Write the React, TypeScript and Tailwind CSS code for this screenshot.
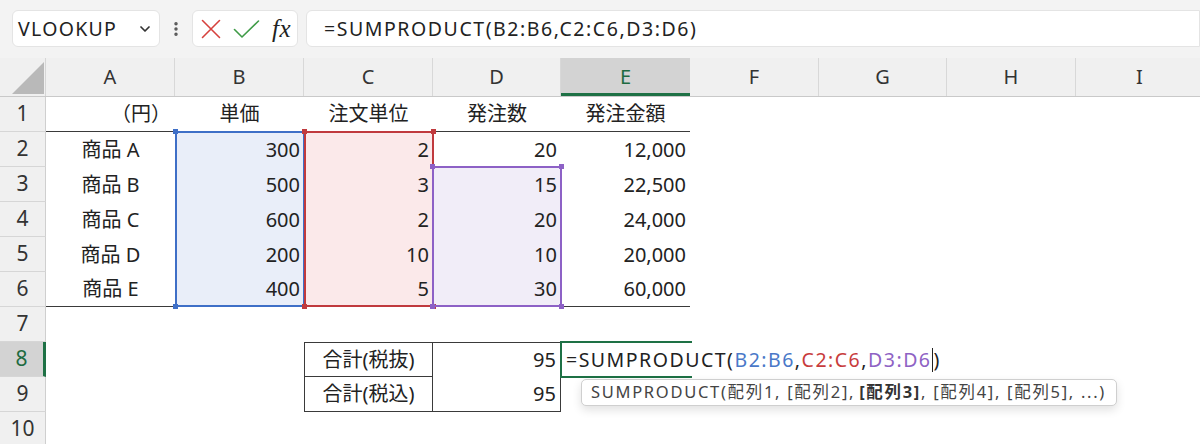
import { ChevronDown, EllipsisVertical } from "lucide-react";

type Align = "l" | "c" | "r";
type Cell = { t: string; a: Align } | null;

const COLS = ["A", "B", "C", "D", "E", "F", "G", "H", "I"];

const ROWS: Cell[][] = [
  [{ t: "（円）", a: "r" }, { t: "単価", a: "c" }, { t: "注文単位", a: "c" }, { t: "発注数", a: "c" }, { t: "発注金額", a: "c" }],
  [{ t: "商品 A", a: "c" }, { t: "300", a: "r" }, { t: "2", a: "r" }, { t: "20", a: "r" }, { t: "12,000", a: "r" }],
  [{ t: "商品 B", a: "c" }, { t: "500", a: "r" }, { t: "3", a: "r" }, { t: "15", a: "r" }, { t: "22,500", a: "r" }],
  [{ t: "商品 C", a: "c" }, { t: "600", a: "r" }, { t: "2", a: "r" }, { t: "20", a: "r" }, { t: "24,000", a: "r" }],
  [{ t: "商品 D", a: "c" }, { t: "200", a: "r" }, { t: "10", a: "r" }, { t: "10", a: "r" }, { t: "20,000", a: "r" }],
  [{ t: "商品 E", a: "c" }, { t: "400", a: "r" }, { t: "5", a: "r" }, { t: "30", a: "r" }, { t: "60,000", a: "r" }],
  [],
  [null, null, { t: "合計(税抜)", a: "c" }, { t: "95", a: "r" }],
  [null, null, { t: "合計(税込)", a: "c" }, { t: "95", a: "r" }],
  [],
];

const ALIGN: Record<Align, string> = {
  l: "justify-start pl-[4px]",
  c: "justify-center",
  r: "justify-end pr-[4px]",
};

// per-cell border classes (row index 0-based, col index 0-based)
function borderFor(r: number, c: number): string {
  const cls: string[] = [];
  if ((r === 0 || r === 5) && c <= 4) cls.push("border-b border-b-[#3a3a3a]");
  if (r === 7 && c === 2) cls.push("border-l border-t border-r border-b border-[#3a3a3a]");
  if (r === 7 && c === 3) cls.push("border-t border-r border-[#3a3a3a]");
  if (r === 8 && c === 2) cls.push("border-l border-r border-b border-[#3a3a3a]");
  if (r === 8 && c === 3) cls.push("border-r border-b border-[#3a3a3a]");
  return cls.join(" ");
}

function fillFor(r: number, c: number): string {
  if (c === 1 && r >= 1 && r <= 5) return "bg-[#e9eef9]";
  if (c === 2 && r >= 1 && r <= 5) return "bg-[#fbe9ea]";
  if (c === 3 && r >= 2 && r <= 5) return "bg-[#f1edf8]";
  return "";
}

function RangeBox({ left, top, w, h, color }: { left: string; top: string; w: string; h: string; color: string }) {
  const handle = `absolute w-[5px] h-[5px] ${color}`;
  return (
    <div className={`absolute pointer-events-none ${left} ${top} ${w} ${h}`}>
      <div className={`absolute left-0 top-0 right-0 h-[2px] ${color}`} />
      <div className={`absolute left-0 bottom-0 right-0 h-[2px] ${color}`} />
      <div className={`absolute left-0 top-0 bottom-0 w-[2px] ${color}`} />
      <div className={`absolute right-0 top-0 bottom-0 w-[2px] ${color}`} />
      <div className={`${handle} -left-[2px] -top-[2px]`} />
      <div className={`${handle} -right-[2px] -top-[2px]`} />
      <div className={`${handle} -left-[2px] -bottom-[2px]`} />
      <div className={`${handle} -right-[2px] -bottom-[2px]`} />
    </div>
  );
}

const GRID = "grid grid-cols-[46px_129px_129px_129px_128px_129px_129px_128px_129px_128px]";

export default function App() {
  return (
    <div className="relative w-[1200px] h-[444px] overflow-hidden bg-white text-[#222] font-['Noto_Sans','Noto_Sans_CJK_JP',sans-serif]">
      {/* formula bar strip */}
      <div className="flex items-start h-[58px] bg-[#f3f3f3] pt-[10px] pl-[12px]">
        <div className="flex items-center justify-between w-[148px] h-[37px] bg-white border border-[#e4e4e4] rounded-[6px] pl-[5px] pr-[6px]">
          <span className="text-[19.5px] tracking-[1.3px]">VLOOKUP</span>
          <ChevronDown size={16} strokeWidth={2.6} className="text-[#333]" />
        </div>
        <div className="flex items-center justify-center w-[32px] h-[37px] text-[#555]">
          <EllipsisVertical size={18} strokeWidth={2.6} />
        </div>
        <div className="flex items-center w-[106px] h-[37px] bg-white border border-[#e4e4e4] rounded-[6px] pl-[7px]">
          {/* cancel */}
          <svg width="20" height="20" viewBox="0 0 20 20" className="ml-[1px]">
            <path d="M1.5 1.5 18.5 18.5M18.5 1.5 1.5 18.5" stroke="#d6413d" strokeWidth="1.6" strokeLinecap="round" fill="none" />
          </svg>
          {/* enter */}
          <svg width="27" height="20" viewBox="0 0 27 20" className="ml-[12px]">
            <path d="M1.5 10.5 9 18 25.5 2" stroke="#3f9b47" strokeWidth="1.6" strokeLinecap="round" strokeLinejoin="round" fill="none" />
          </svg>
          <span className="font-['Liberation_Serif',serif] italic text-[25px] font-normal leading-none ml-[12px] tracking-[0.5px]">fx</span>
        </div>
        <div className="flex items-center flex-1 h-[37px] bg-white border border-[#e4e4e4] rounded-l-[6px] ml-[8px] pl-[17px]">
          <span className="text-[19.5px] tracking-[1.55px]">=SUMPRODUCT(B2:B6,C2:C6,D3:D6)</span>
        </div>
      </div>

      {/* column headers */}
      <div className={`${GRID} h-[39px] bg-[#f0f0f0] border-b border-[#c9c9c9]`}>
        <div className="relative border-r border-[#d6d6d6]">
          <svg className="absolute left-[12px] top-[4px]" width="32" height="32" viewBox="0 0 32 32">
            <polygon points="32,0 32,32 0,32" fill="#b9b9b9" />
          </svg>
        </div>
        {COLS.map((c) =>
          c === "E" ? (
            <div key={c} className="flex items-center justify-center bg-[#d3d3d3] border-b-[3px] border-[#1e7145] text-[#1e6b41] text-[20px] pt-[3px]">
              {c}
            </div>
          ) : (
            <div key={c} className="flex items-center justify-center border-r border-[#d8d8d8] text-[#333] text-[20px]">
              {c}
            </div>
          )
        )}
      </div>

      {/* sheet body */}
      <div className="relative">
        {ROWS.map((row, r) => (
          <div key={r} className={`${GRID} h-[35px]`}>
            <div
              className={
                r === 7
                  ? "relative z-10 flex items-center justify-center bg-[#d3d3d3] border-r-[3px] border-r-[#1e7145] border-b border-b-[#d6d6d6] text-[#1e6b41] text-[21px]"
                  : "relative z-10 flex items-center justify-center bg-[#f0f0f0] border-r border-r-[#cfcfcf] border-b border-b-[#d6d6d6] text-[#333] text-[21px]"
              }
            >
              {r + 1}
            </div>
            {COLS.map((_, c) => {
              const cell = row[c] ?? null;
              const isFormula = r === 7 && c === 4;
              return (
                <div
                  key={c}
                  className={`relative flex items-center text-[20px] whitespace-nowrap ${fillFor(r, c)} ${borderFor(r, c)} ${
                    cell ? ALIGN[cell.a] : ""
                  } ${isFormula ? "z-30 pl-[5px]" : ""}`}
                >
                  {cell && cell.t}
                  {isFormula && (
                    <span className="text-[19.5px] tracking-[1.5px] flex items-center">
                      =SUMPRODUCT(
                      <span className="text-[#4a78c8]">B2:B6</span>,
                      <span className="text-[#c83c3c]">C2:C6</span>,
                      <span className="text-[#8e62c4]">D3:D6</span>
                      <span className="inline-block w-px h-[24px] bg-[#222] mr-[1px]" />)
                    </span>
                  )}
                </div>
              );
            })}
          </div>
        ))}

        {/* reference outlines for the formula's ranges */}
        <div className="absolute inset-0 z-20 pointer-events-none">
          <RangeBox left="left-[175px]" top="top-[34px]" w="w-[130px]" h="h-[176px]" color="bg-[#3e6fc7]" />
          <RangeBox left="left-[304px]" top="top-[34px]" w="w-[130px]" h="h-[176px]" color="bg-[#c03a3e]" />
          <RangeBox left="left-[432px]" top="top-[69px]" w="w-[130px]" h="h-[141px]" color="bg-[#8d61c6]" />
          {/* active cell E8 in edit mode */}
          <div className="absolute left-[560px] top-[244px] w-[132px] h-[37px] border-2 border-r-0 border-[#1e7145]" />
        </div>
      </div>

      {/* argument tooltip */}
      <div className="absolute left-[581px] top-[379px] z-40 h-[27px] flex items-center bg-white border border-[#cfcfcf] rounded-[5px] pl-[9px] pr-[10px] shadow-[0_4px_10px_rgba(0,0,0,0.12)] text-[16.5px] tracking-[1.7px] text-[#444] whitespace-nowrap">
        SUMPRODUCT(配列1, [配列2], <b className="font-bold text-[#333] ml-[4px]">[配列3]</b>, [配列4], [配列5], ...)
      </div>
    </div>
  );
}
